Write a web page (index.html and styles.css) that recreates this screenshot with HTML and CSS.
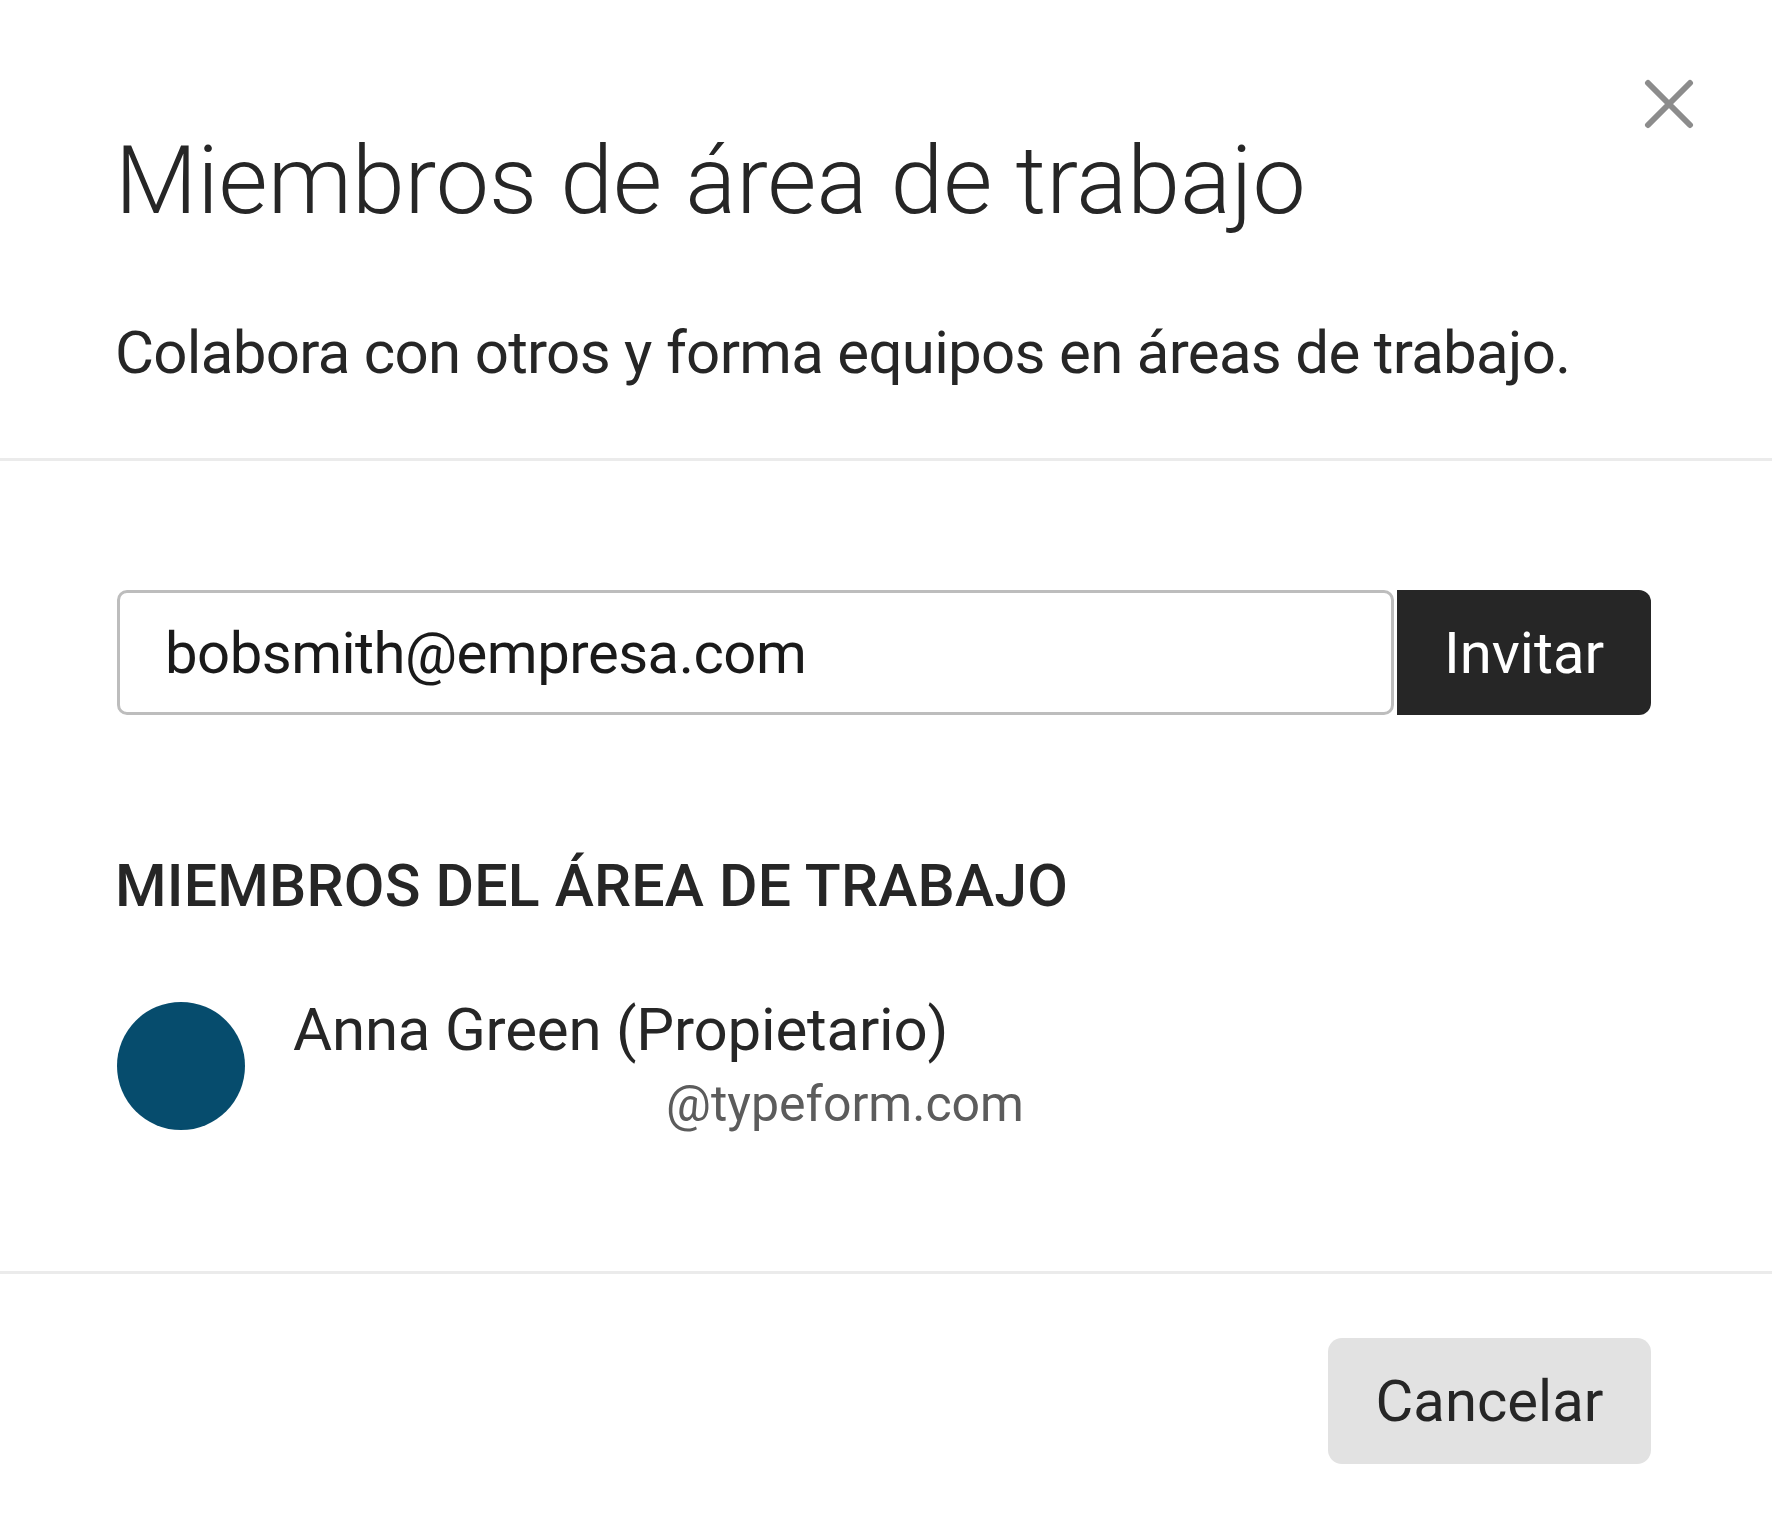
FILE: index.html
```html
<!DOCTYPE html>
<html lang="es">
<head>
    <meta charset="UTF-8">
    <meta name="viewport" content="width=device-width, initial-scale=1.0">
    <title>Miembros de área de trabajo</title>
    <link rel="stylesheet" href="styles.css">
</head>
<body>

<div class="modal">
    <button class="close-btn" aria-label="Cerrar">
        <svg width="50" height="50" viewBox="0 0 50 50">
            <path d="M4 4 L46 46 M46 4 L4 46" stroke="#8c8c8c" stroke-width="6" stroke-linecap="round" fill="none"/>
        </svg>
    </button>

    <header class="modal-head">
        <h1>Miembros de área de trabajo</h1>
        <p>Colabora con otros y forma equipos en áreas de trabajo.</p>
    </header>

    <section class="modal-body">
        <form class="invite">
            <input type="text" id="emailInput" value="bobsmith@empresa.com">
            <button type="button" id="inviteBtn">Invitar</button>
        </form>

        <h2>MIEMBROS DEL ÁREA DE TRABAJO</h2>

        <ul class="members">
            <li>
                <span class="avatar"></span>
                <div class="member-info">
                    <span class="member-name">Anna Green (Propietario)</span>
                    <span class="member-mail">@typeform.com</span>
                </div>
            </li>
        </ul>
    </section>

    <footer class="modal-foot">
        <button type="button" class="cancel-btn">Cancelar</button>
    </footer>
</div>

</body>
</html>
```

FILE: styles.css
```css
body {
    margin: 0;
    background-color: #ffffff;
    font-family: Roboto, "Noto Sans", sans-serif;
    color: #262626;
}

.modal {
    position: relative;
    background-color: #ffffff;
    min-height: 1520px;
}

.close-btn {
    position: absolute;
    top: 79px;
    left: 1644px;
    width: 50px;
    height: 50px;
    padding: 0;
    border: none;
    background: none;
    cursor: pointer;
}

.close-btn svg {
    display: block;
}

.modal-head {
    padding: 133px 121px 75px 115px;
    border-bottom: 3px solid #ebebeb;
}

.modal-head h1 {
    margin: 0;
    font-size: 95px;
    line-height: 1;
    font-weight: 300;
}

.modal-head p {
    margin: 95px 0 0;
    font-size: 60px;
    line-height: 1;
    font-weight: 400;
    letter-spacing: -0.7px;
}

.modal-body {
    padding: 129px 121px 141px 117px;
    border-bottom: 3px solid #ebebeb;
}

.invite {
    display: flex;
    gap: 3px;
    height: 125px;
    margin: 0;
}

.invite input {
    flex: 1;
    box-sizing: border-box;
    height: 100%;
    padding: 0 20px 0 45px;
    border: 3px solid #bdbdbd;
    border-radius: 10px;
    font-family: inherit;
    font-size: 58px;
    letter-spacing: -0.5px;
    color: #1a1a1a;
    outline: none;
}

.invite button {
    width: 254px;
    border: none;
    border-radius: 0 12px 12px 0;
    background-color: #262626;
    color: #ffffff;
    font-family: inherit;
    font-size: 58px;
    cursor: pointer;
}

.modal-body h2 {
    margin: 141px 0 0 -2px;
    font-size: 59px;
    line-height: 1;
    font-weight: 500;
    letter-spacing: 0.2px;
}

.members {
    list-style: none;
    margin: 87px 0 0;
    padding: 0;
}

.members li {
    display: flex;
    align-items: flex-start;
    gap: 48px;
}

.avatar {
    flex: none;
    width: 128px;
    height: 128px;
    border-radius: 50%;
    background-color: #064c6d;
}

.member-info {
    display: flex;
    flex-direction: column;
    align-items: flex-start;
    margin-top: -2px;
}

.member-name {
    font-size: 60px;
    line-height: 1;
    font-weight: 400;
    letter-spacing: -0.2px;
}

.member-mail {
    margin: 19px 0 0 373px;
    font-size: 50px;
    line-height: 1;
    color: #5c5c5c;
}

.modal-foot {
    display: flex;
    justify-content: flex-end;
    padding: 64px 121px 0 118px;
}

.cancel-btn {
    width: 323px;
    height: 126px;
    border: none;
    border-radius: 14px;
    background-color: #e2e2e2;
    color: #262626;
    font-family: inherit;
    font-size: 58px;
    cursor: pointer;
}
```
